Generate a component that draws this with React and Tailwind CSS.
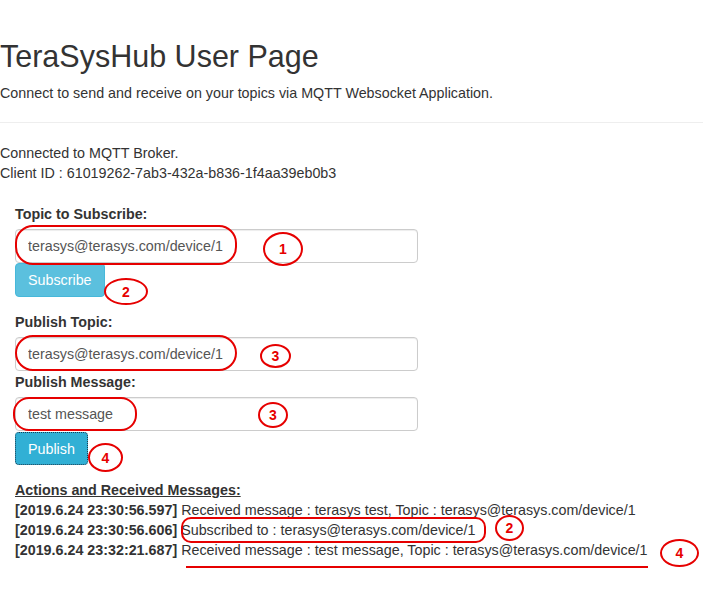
import React from "react";

// red hand-drawn style marks laid over the page
function Mark({ className, label }) {
    return (
        <div
            className={`absolute flex items-center justify-center border-2 border-[#e60000] text-[14px] font-bold leading-none text-[#e60000] ${className}`}
        >
            {label}
        </div>
    );
}

const logs = [
    { time: "[2019.6.24 23:30:56.597]", text: "Received message : terasys test, Topic : terasys@terasys.com/device/1" },
    { time: "[2019.6.24 23:30:56.606]", text: "Subscribed to : terasys@terasys.com/device/1" },
    { time: "[2019.6.24 23:32:21.687]", text: "Received message : test message, Topic : terasys@terasys.com/device/1" },
];

const inputCls =
    "block h-[34px] w-[403px] rounded-[4px] border border-[#ccc] px-[12px] text-[14.3px] text-[#555] shadow-[inset_0_1px_1px_rgba(0,0,0,0.075)] outline-none";

export default function App() {
    return (
        <div className="relative min-h-[592px] w-[703px] overflow-hidden bg-white font-['Liberation_Sans',Arial,sans-serif] text-[14.3px] leading-[20px] text-[#333]">
            <div className="pt-[40px]">
                <h1 className="text-[30.5px] leading-[33px] font-normal">TeraSysHub User Page</h1>
                <p className="mt-[10px]">Connect to send and receive on your topics via MQTT Websocket Application.</p>
            </div>

            <hr className="mt-[19px] border-0 border-t border-[#eee]" />

            <div className="mt-[20px]">
                <div>Connected to MQTT Broker.</div>
                <div>Client ID : 61019262-7ab3-432a-b836-1f4aa39eb0b3</div>
            </div>

            <div className="mt-[21px] px-[15px]">
                <label className="mb-[5px] block font-bold">Topic to Subscribe:</label>
                <input readOnly value="terasys@terasys.com/device/1" className={inputCls} />
                <button className="block h-[34px] rounded-[4px] border border-[#46b8da] bg-[#5bc0de] px-[12px] text-[14.3px] text-white">
                    Subscribe
                </button>

                <label className="mt-[15px] mb-[5px] block font-bold">Publish Topic:</label>
                <input readOnly value="terasys@terasys.com/device/1" className={inputCls} />
                <label className="mt-[1px] mb-[5px] block font-bold">Publish Message:</label>
                <input readOnly value="test message" className={inputCls} />
                <button className="mt-[1px] block h-[33px] rounded-[4px] border border-dotted border-[#1b3d52] bg-[#31b0d5] px-[12px] text-[14.3px] text-white">
                    Publish
                </button>

                <div className="mt-[15px]">
                    <div className="font-bold underline">Actions and Received Messages:</div>
                    {logs.map((l) => (
                        <div key={l.time} className="whitespace-nowrap">
                            <span className="font-bold">{l.time}</span> {l.text}
                        </div>
                    ))}
                </div>
            </div>

            {/* annotations */}
            <Mark className="left-[15px] top-[225px] h-[40px] w-[222px] rounded-[18px]" />
            <Mark className="left-[263px] top-[232px] h-[34px] w-[40px] rounded-[50%]" label="1" />
            <Mark className="left-[104px] top-[278px] h-[27px] w-[44px] rounded-[50%]" label="2" />
            <Mark className="left-[15px] top-[335px] h-[36px] w-[222px] rounded-[18px]" />
            <Mark className="left-[260px] top-[344px] h-[24px] w-[31px] rounded-[50%]" label="3" />
            <Mark className="left-[13px] top-[397px] h-[34px] w-[124px] rounded-[16px]" />
            <Mark className="left-[258px] top-[402px] h-[26px] w-[30px] rounded-[50%]" label="3" />
            <Mark className="left-[88px] top-[443px] h-[29px] w-[35px] rounded-[50%]" label="4" />
            <Mark className="left-[181px] top-[517px] h-[26px] w-[305px] rounded-[10px]" />
            <Mark className="left-[495px] top-[515px] h-[26px] w-[29px] rounded-[50%]" label="2" />
            <Mark className="left-[660px] top-[539px] h-[28px] w-[39px] rounded-[50%]" label="4" />
            <div className="absolute left-[186px] top-[566px] h-[2px] w-[462px] bg-[#e60000]" />
        </div>
    );
}
